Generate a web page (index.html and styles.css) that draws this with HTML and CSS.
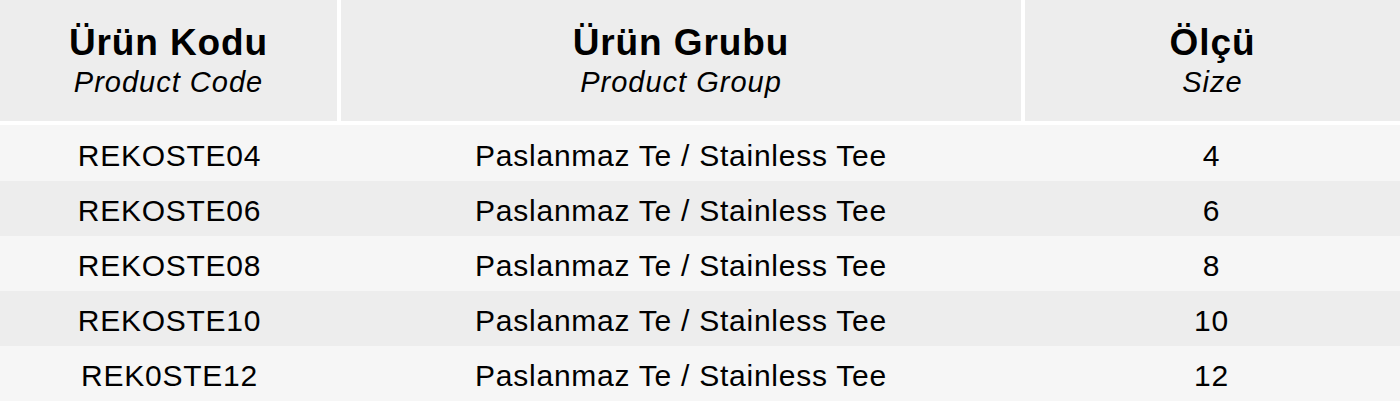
FILE: index.html
```html
<!DOCTYPE html>
<html lang="tr">
<head>
<meta charset="utf-8">
<title>Ürün Tablosu</title>
<link rel="stylesheet" href="styles.css">
</head>
<body>
<div class="table">
  <div class="head">
    <div class="hcell"><div class="tr">Ürün Kodu</div><div class="en">Product Code</div></div>
    <div class="hcell"><div class="tr">Ürün Grubu</div><div class="en">Product Group</div></div>
    <div class="hcell"><div class="tr">Ölçü</div><div class="en">Size</div></div>
  </div>
  <div class="body">
    <div class="row"><div class="cell">REKOSTE04</div><div class="cell">Paslanmaz Te / Stainless Tee</div><div class="cell">4</div></div>
    <div class="row"><div class="cell">REKOSTE06</div><div class="cell">Paslanmaz Te / Stainless Tee</div><div class="cell">6</div></div>
    <div class="row"><div class="cell">REKOSTE08</div><div class="cell">Paslanmaz Te / Stainless Tee</div><div class="cell">8</div></div>
    <div class="row"><div class="cell">REKOSTE10</div><div class="cell">Paslanmaz Te / Stainless Tee</div><div class="cell">10</div></div>
    <div class="row"><div class="cell">REK0STE12</div><div class="cell">Paslanmaz Te / Stainless Tee</div><div class="cell">12</div></div>
  </div>
</div>
</body>
</html>
```
FILE: styles.css
```css
html, body {
  margin: 0;
  padding: 0;
  background: #ffffff;
}
body {
  font-family: "Liberation Sans", Arial, sans-serif;
  color: #000000;
  width: 1400px;
  height: 402px;
  overflow: hidden;
}
.table {
  display: flex;
  flex-direction: column;
  gap: 4px;
}
.head {
  display: grid;
  grid-template-columns: 337px 680px 375px;
  column-gap: 4px;
  height: 121px;
}
.hcell {
  background: #ededed;
  display: flex;
  flex-direction: column;
  align-items: center;
  padding-top: 22px;
}
.tr {
  font-weight: bold;
  font-size: 37px;
  line-height: 42px;
  letter-spacing: 0.9px;
}
.en {
  font-style: italic;
  font-size: 29px;
  line-height: 36px;
  letter-spacing: 1px;
}
.body {
  display: grid;
  grid-template-rows: 56px repeat(4, 55px);
}
.row {
  display: grid;
  grid-template-columns: 339px 684px 377px;
  background: #f6f6f6;
}
.row:nth-child(even) {
  background: #ededed;
}
.cell {
  display: flex;
  align-items: center;
  justify-content: center;
  font-size: 30px;
  letter-spacing: 0.75px;
  padding-top: 5px;
}
```
